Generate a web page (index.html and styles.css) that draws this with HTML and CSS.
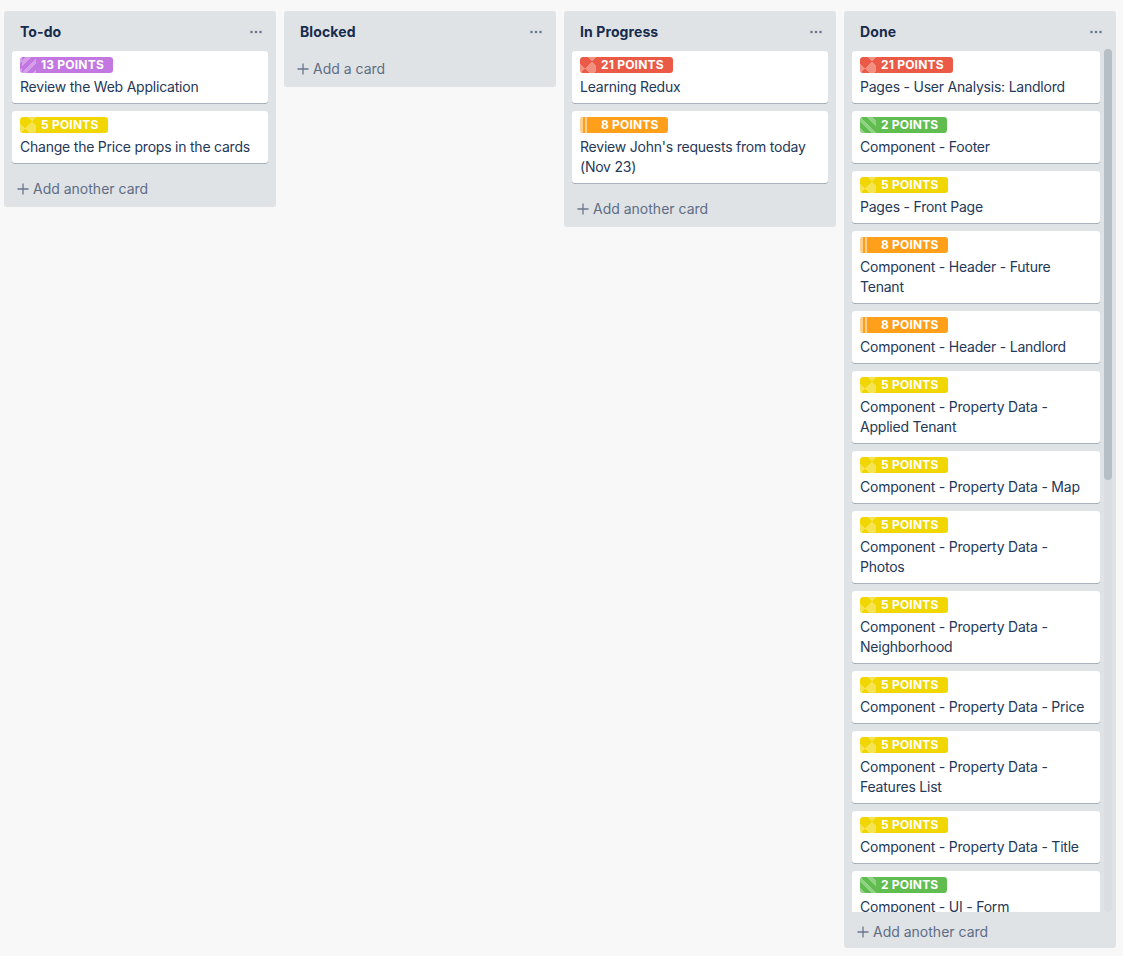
FILE: index.html
```html
<!DOCTYPE html>
<html lang="en">
<head>
<meta charset="utf-8">
<title>Board</title>
<link rel="stylesheet" href="styles.css">
</head>
<body>
<div class="board">
  <section class="list">
    <header class="list-header">
      <h2 class="list-title">To-do</h2>
      <svg class="list-menu" width="12" height="4" viewBox="0 0 12 4"><circle cx="1.5" cy="2" r="1.3"/><circle cx="6" cy="2" r="1.3"/><circle cx="10.5" cy="2" r="1.3"/></svg>
    </header>
    <div class="list-cards">
      <div class="card"><span class="label purple"><span class="pattern"></span>13 POINTS</span><span class="card-title">Review the Web Application</span></div>
      <div class="card"><span class="label yellow"><span class="pattern"></span>5 POINTS</span><span class="card-title">Change the Price props in the cards</span></div>
    </div>
    <div class="list-footer"><svg class="plus" width="12" height="12" viewBox="0 0 12 12"><path d="M6 0.5v11M0.5 6h11"/></svg>Add another card</div>
  </section>

  <section class="list">
    <header class="list-header">
      <h2 class="list-title">Blocked</h2>
      <svg class="list-menu" width="12" height="4" viewBox="0 0 12 4"><circle cx="1.5" cy="2" r="1.3"/><circle cx="6" cy="2" r="1.3"/><circle cx="10.5" cy="2" r="1.3"/></svg>
    </header>
    <div class="list-footer"><svg class="plus" width="12" height="12" viewBox="0 0 12 12"><path d="M6 0.5v11M0.5 6h11"/></svg>Add a card</div>
  </section>

  <section class="list">
    <header class="list-header">
      <h2 class="list-title">In Progress</h2>
      <svg class="list-menu" width="12" height="4" viewBox="0 0 12 4"><circle cx="1.5" cy="2" r="1.3"/><circle cx="6" cy="2" r="1.3"/><circle cx="10.5" cy="2" r="1.3"/></svg>
    </header>
    <div class="list-cards">
      <div class="card"><span class="label red"><span class="pattern"></span>21 POINTS</span><span class="card-title">Learning Redux</span></div>
      <div class="card"><span class="label orange"><span class="pattern"></span>8 POINTS</span><span class="card-title">Review John's requests from today (Nov 23)</span></div>
    </div>
    <div class="list-footer"><svg class="plus" width="12" height="12" viewBox="0 0 12 12"><path d="M6 0.5v11M0.5 6h11"/></svg>Add another card</div>
  </section>

  <section class="list list-scroll">
    <header class="list-header">
      <h2 class="list-title">Done</h2>
      <svg class="list-menu" width="12" height="4" viewBox="0 0 12 4"><circle cx="1.5" cy="2" r="1.3"/><circle cx="6" cy="2" r="1.3"/><circle cx="10.5" cy="2" r="1.3"/></svg>
    </header>
    <div class="list-cards">
      <div class="card"><span class="label red"><span class="pattern"></span>21 POINTS</span><span class="card-title">Pages - User Analysis: Landlord</span></div>
      <div class="card"><span class="label green"><span class="pattern"></span>2 POINTS</span><span class="card-title">Component - Footer</span></div>
      <div class="card"><span class="label yellow"><span class="pattern"></span>5 POINTS</span><span class="card-title">Pages - Front Page</span></div>
      <div class="card"><span class="label orange"><span class="pattern"></span>8 POINTS</span><span class="card-title">Component - Header - Future Tenant</span></div>
      <div class="card"><span class="label orange"><span class="pattern"></span>8 POINTS</span><span class="card-title">Component - Header - Landlord</span></div>
      <div class="card"><span class="label yellow"><span class="pattern"></span>5 POINTS</span><span class="card-title">Component - Property Data - Applied Tenant</span></div>
      <div class="card"><span class="label yellow"><span class="pattern"></span>5 POINTS</span><span class="card-title">Component - Property Data - Map</span></div>
      <div class="card"><span class="label yellow"><span class="pattern"></span>5 POINTS</span><span class="card-title">Component - Property Data - Photos</span></div>
      <div class="card"><span class="label yellow"><span class="pattern"></span>5 POINTS</span><span class="card-title">Component - Property Data - Neighborhood</span></div>
      <div class="card"><span class="label yellow"><span class="pattern"></span>5 POINTS</span><span class="card-title">Component - Property Data - Price</span></div>
      <div class="card"><span class="label yellow"><span class="pattern"></span>5 POINTS</span><span class="card-title">Component - Property Data - Features List</span></div>
      <div class="card"><span class="label yellow"><span class="pattern"></span>5 POINTS</span><span class="card-title">Component - Property Data - Title</span></div>
      <div class="card"><span class="label green"><span class="pattern"></span>2 POINTS</span><span class="card-title">Component - UI - Form</span></div>
    </div>
    <div class="scrollbar"><div class="scroll-thumb"></div></div>
    <div class="list-footer footer-low"><svg class="plus" width="12" height="12" viewBox="0 0 12 12"><path d="M6 0.5v11M0.5 6h11"/></svg>Add another card</div>
  </section>
</div>
</body>
</html>
```

FILE: styles.css
```css
html, body {
  margin: 0;
  height: 100%;
}

body {
  background: #f8f8f8;
  font-family: Inter, "Liberation Sans", sans-serif;
  font-size: 14px;
  color: #172b4d;
}

.board {
  display: flex;
  align-items: flex-start;
  gap: 8px;
  height: 100vh;
  box-sizing: border-box;
  padding: 11px 4px 8px 4px;
}

.list {
  position: relative;
  flex: none;
  width: 272px;
  max-height: 100%;
  display: flex;
  flex-direction: column;
  background: #dfe3e6;
  border-radius: 3px;
  box-sizing: border-box;
}

.list-header {
  display: flex;
  align-items: center;
  justify-content: space-between;
  padding: 11px 14px 9px 16px;
  flex: none;
}

.list-title {
  margin: 0;
  font-size: 14px;
  font-weight: 700;
  line-height: 20px;
  color: #172b4d;
  letter-spacing: 0.1px;
}

.list-menu {
  fill: #6b778c;
}

.list-cards {
  flex: 1 1 auto;
  min-height: 0;
  overflow: hidden;
  margin: 0 4px;
  padding: 0 4px;
}

.list-scroll .list-cards {
  padding-right: 12px;
}

.scrollbar {
  position: absolute;
  top: 38px;
  bottom: 36px;
  right: 4px;
  width: 8px;
  border-radius: 4px;
  background: #dadee2;
}

.scroll-thumb {
  height: 431px;
  border-radius: 4px;
  background: #b6bfc6;
}

.card {
  background: #fff;
  border-radius: 3px;
  box-shadow: 0 1px 0 rgba(9, 30, 66, 0.25);
  padding: 6px 8px;
  margin-bottom: 8px;
}

.label {
  display: flex;
  width: max-content;
  align-items: center;
  height: 16px;
  margin-bottom: 4px;
  padding-right: 9px;
  border-radius: 3px;
  overflow: hidden;
  color: #fff;
  font-size: 12px;
  font-weight: 700;
  line-height: 16px;
  letter-spacing: 0.2px;
}

.pattern {
  width: 16px;
  height: 16px;
  margin-right: 5px;
  flex: none;
}

.purple { background-color: #c377e0; }
.yellow { background-color: #f2d600; }
.red { background-color: #eb5a46; }
.orange { background-color: #ff9f1a; }
.green { background-color: #61bd4f; }

.purple .pattern {
  background-image: repeating-linear-gradient(-45deg, rgba(255,255,255,0.3) 0 4px, transparent 4px 8px);
  background-position: 2px 0;
}

.green .pattern {
  background-image: repeating-linear-gradient(45deg, rgba(255,255,255,0.3) 0 4px, transparent 4px 8px);
}

.yellow .pattern,
.red .pattern {
  background-image:
    linear-gradient(45deg, rgba(255,255,255,0.32) 25%, transparent 25%, transparent 75%, rgba(255,255,255,0.32) 75%),
    linear-gradient(-45deg, rgba(255,255,255,0.32) 25%, transparent 25%, transparent 75%, rgba(255,255,255,0.32) 75%);
  background-size: 14px 14px;
  background-position: -2px -3px;
}

.orange .pattern {
  background-image: linear-gradient(90deg, rgba(255,255,255,0.5) 0 3px, transparent 3px 5px, rgba(255,255,255,0.5) 5px 7px, transparent 7px);
}

.card-title {
  display: block;
  line-height: 20px;
  letter-spacing: -0.22px;
  color: #253858;
}

.list-footer {
  flex: none;
  display: flex;
  align-items: center;
  gap: 4px;
  margin: 0 8px;
  padding: 8px 4px 8px 5px;
  color: #5e6c84;
  line-height: 20px;
}

.footer-low {
  padding-top: 10px;
  padding-bottom: 6px;
}

.plus {
  stroke: #6b778c;
  stroke-width: 1.3;
  fill: none;
}
```
